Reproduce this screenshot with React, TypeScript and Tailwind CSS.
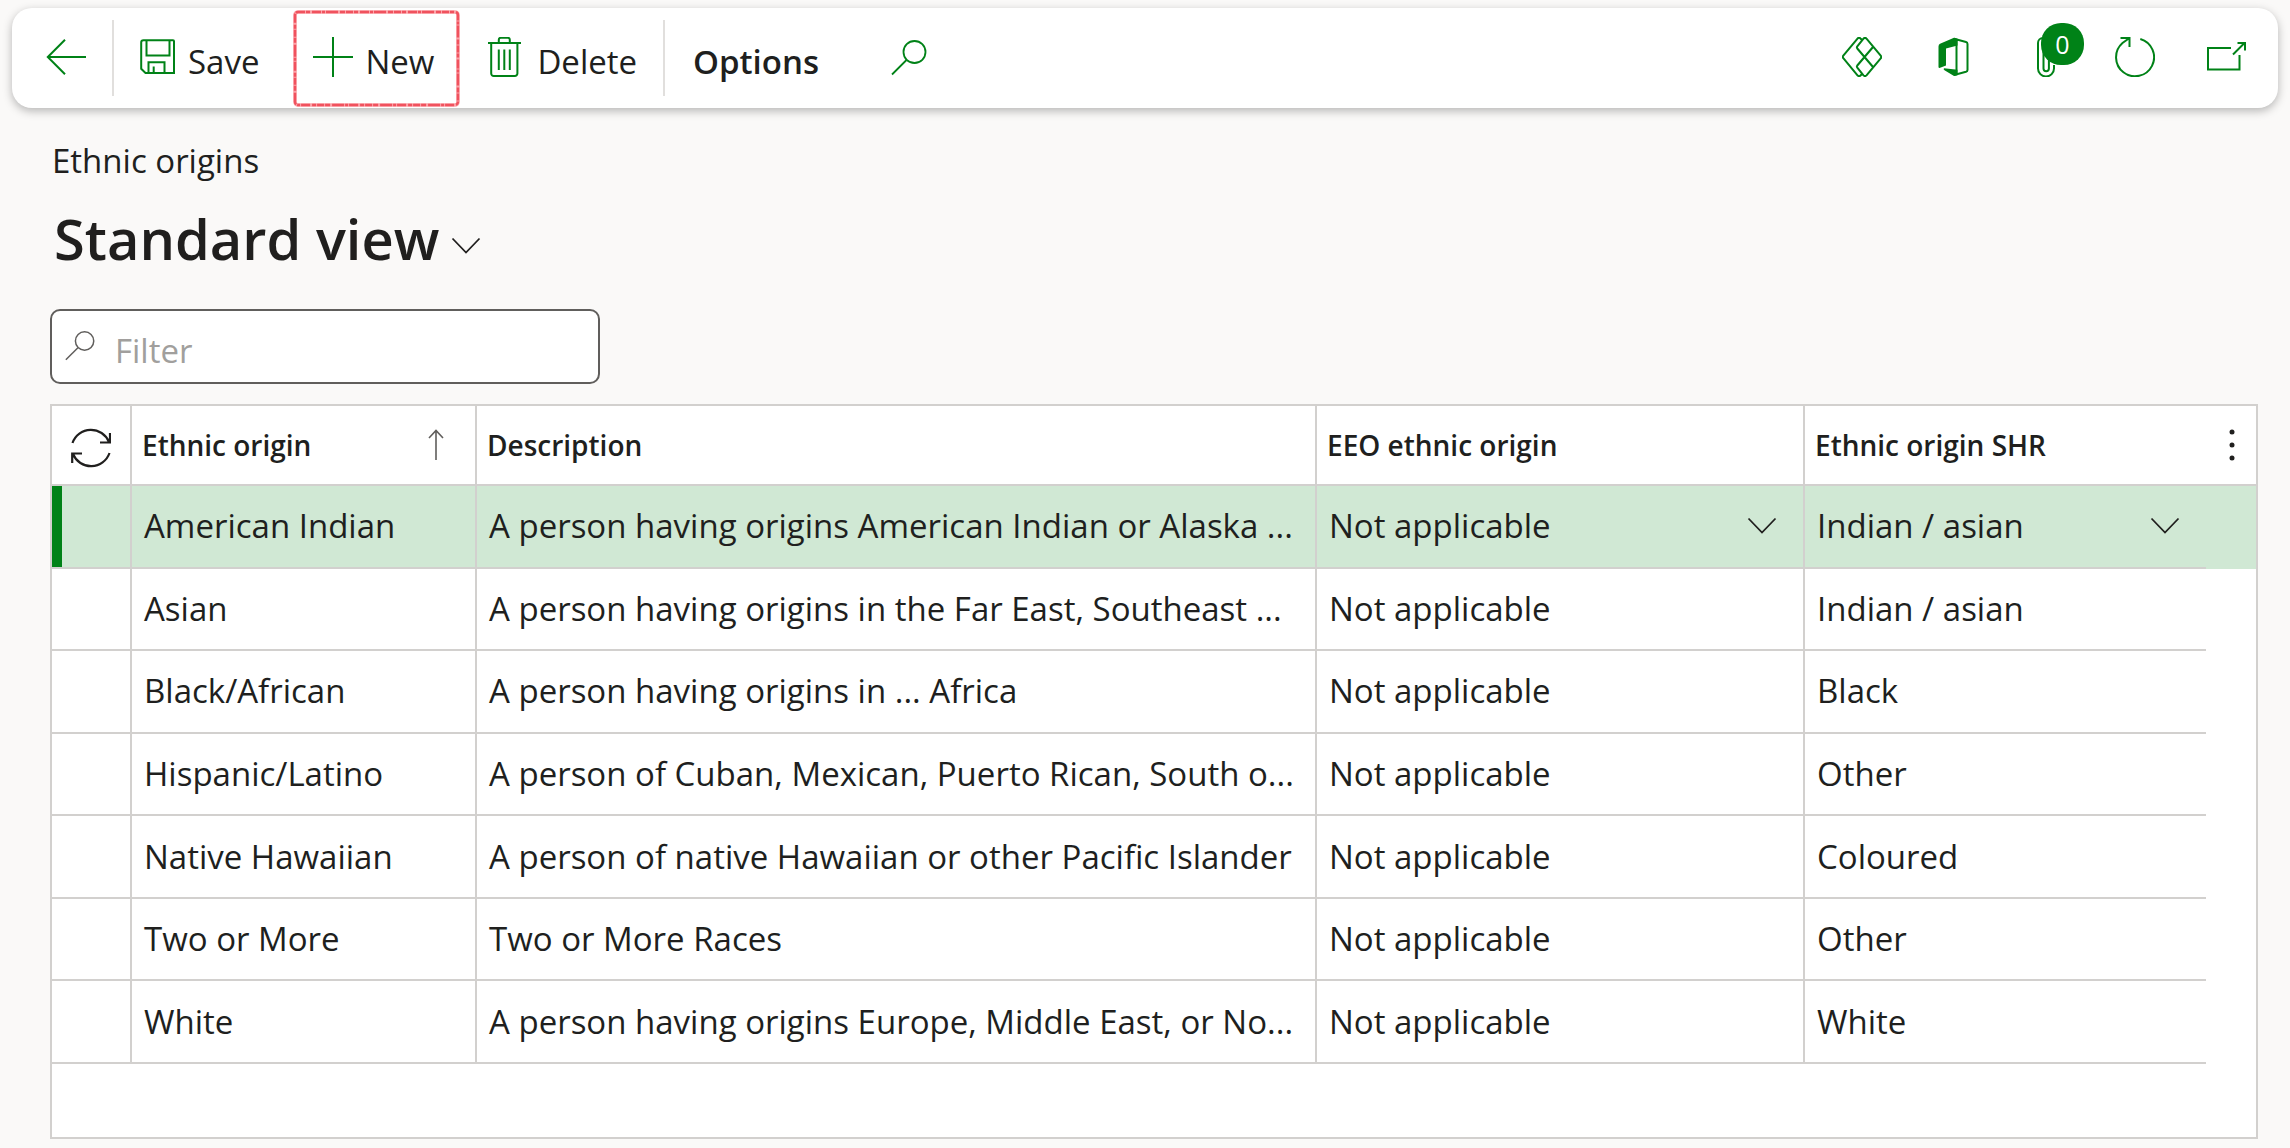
import { ReactNode } from "react";

type Origin = {
  name: string;
  description: string;
  eeo: string;
  shr: string;
};

const origins: Origin[] = [
  {
    name: "American Indian",
    description: "A person having origins American Indian or Alaska ...",
    eeo: "Not applicable",
    shr: "Indian / asian",
  },
  {
    name: "Asian",
    description: "A person having origins in the Far East, Southeast ...",
    eeo: "Not applicable",
    shr: "Indian / asian",
  },
  {
    name: "Black/African",
    description: "A person having origins in ... Africa",
    eeo: "Not applicable",
    shr: "Black",
  },
  {
    name: "Hispanic/Latino",
    description: "A person of Cuban, Mexican, Puerto Rican, South o...",
    eeo: "Not applicable",
    shr: "Other",
  },
  {
    name: "Native Hawaiian",
    description: "A person of native Hawaiian or other Pacific Islander",
    eeo: "Not applicable",
    shr: "Coloured",
  },
  {
    name: "Two or More",
    description: "Two or More Races",
    eeo: "Not applicable",
    shr: "Other",
  },
  {
    name: "White",
    description: "A person having origins Europe, Middle East, or No...",
    eeo: "Not applicable",
    shr: "White",
  },
];

function Icon({
  width,
  height,
  className = "",
  children,
}: {
  width: number;
  height: number;
  className?: string;
  children: ReactNode;
}) {
  return (
    <svg
      width={width}
      height={height}
      viewBox={`0 0 ${width} ${height}`}
      fill="none"
      stroke="currentColor"
      strokeWidth={2}
      className={`shrink-0 ${className}`}
      aria-hidden="true"
    >
      {children}
    </svg>
  );
}

const SearchIcon = ({ className = "" }: { className?: string }) => (
  <Icon width={36} height={36} className={className}>
    <circle cx="23.5" cy="12" r="11" strokeWidth={1.8} />
    <path d="M15.5 20 1 34.5" strokeWidth={1.8} />
  </Icon>
);

const ChevronIcon = ({ className = "" }: { className?: string }) => (
  <Icon width={30} height={18} className={className}>
    <path d="m1.5 1.500 13.500 14 13.500-14" strokeWidth={1.8} />
  </Icon>
);

function Divider() {
  return <div className="h-[76px] w-[2px] shrink-0 bg-[#e1dfdd]" />;
}

function ToolbarLabel({ children }: { children: ReactNode }) {
  return (
    <span className="pt-[6px] text-[33px] leading-none text-[#201f1e]">
      {children}
    </span>
  );
}

function ToolbarIcon({
  label,
  children,
}: {
  label: string;
  children: ReactNode;
}) {
  return (
    <button
      type="button"
      aria-label={label}
      className="relative flex h-10 w-10 items-center justify-center"
    >
      {children}
    </button>
  );
}

function Toolbar() {
  return (
    <header className="mx-3 mt-2 flex h-[100px] items-center justify-between rounded-[20px] bg-white shadow-[0_3px_10px_rgba(0,0,0,0.28)]">
      <div className="flex h-full items-center text-[#008217]">
        <button
          type="button"
          aria-label="Back"
          className="flex h-full items-center pr-[26px] pb-[2px] pl-[34px]"
        >
          <Icon width={40} height={36}>
            <path d="M40 18H2M19 .8 1.800 18 19 35.200" />
          </Icon>
        </button>
        <Divider />
        <button
          type="button"
          className="flex h-full items-center gap-3 px-[26px]"
        >
          <Icon width={36} height={36} className="mb-[2px]">
            <path d="M3.500 1.200H33a1 1 0 0 1 1 1V34H5.500L1.200 29.800V3.500a2.300 2.300 0 0 1 2.300-2.300Z" />
            <path d="M6.500 1.500v15h23v-15M8.500 34V23.200h16V34M13.700 34v-6.500" />
          </Icon>
          <ToolbarLabel>Save</ToolbarLabel>
        </button>
        <button
          type="button"
          className="relative flex h-full items-center gap-3 pr-[26px] pl-7"
        >
          {/* Hand-drawn highlight round the button */}
          <svg
            className="pointer-events-none absolute top-[2px] left-[8px] h-[97px] w-[calc(100%-8px)]"
            fill="none"
            aria-hidden="true"
          >
            <g className="[&>rect]:h-[93px] [&>rect]:w-[calc(100%-4px)]">
              <rect x="2" y="2" rx="3" stroke="#fba3a8" strokeWidth={3.6} />
              <rect
                x="2"
                y="2"
                rx="3"
                stroke="#f0525e"
                strokeWidth={2.4}
                strokeDasharray="7 1 4 2 9 1 3 1 12 2 5 1"
              />
            </g>
          </svg>
          <Icon width={40} height={40} className="mb-[2px]">
            <path d="M0 20h40M20 0v40" />
          </Icon>
          <ToolbarLabel>New</ToolbarLabel>
        </button>
        <button
          type="button"
          className="flex h-full items-center gap-4 pr-[26px] pl-7"
        >
          <Icon width={33} height={40} className="mb-[2px]">
            <path d="M0 6h33M10.800 6V2.800a2 2 0 0 1 2-2h7a2 2 0 0 1 2 2V6M3.200 6v30.500a2.500 2.500 0 0 0 2.500 2.500h21.200a2.500 2.500 0 0 0 2.500-2.500V6" />
            <path d="M10.800 12.500V33M16.300 12.500V33M21.800 12.500V33" />
          </Icon>
          <ToolbarLabel>Delete</ToolbarLabel>
        </button>
        <Divider />
        <button
          type="button"
          className="flex h-full items-center px-7 font-semibold"
        >
          <ToolbarLabel>Options</ToolbarLabel>
        </button>
        <button
          type="button"
          aria-label="Search"
          className="flex h-full items-center px-[44px]"
        >
          <SearchIcon />
        </button>
      </div>

      <div className="flex items-center gap-[51px] pr-8 pb-[2px] text-[#008217]">
        <ToolbarIcon label="Power Apps">
          <Icon width={40} height={40}>
            <path d="M20.500 3.500 18.500 1.500a2 2 0 0 0-3 .1L1.300 18.600a2 2 0 0 0 0 2.600l14.200 17.200a2 2 0 0 0 3 .1l2-2" />
            <path d="M21.500 1.600 15.300 9.300a1.800 1.800 0 0 0 0 2.200L31 30M21.500 38.400l-6.200-7.700a1.800 1.800 0 0 1 0-2.200L31 10M21.500 1.600a2 2 0 0 1 3 0l14.200 17.100a2 2 0 0 1 0 2.600L24.500 38.400a2 2 0 0 1-3 0" />
          </Icon>
        </ToolbarIcon>
        <ToolbarIcon label="Open in Microsoft Office">
          <Icon width={31} height={40}>
            <path
              d="M.5 9.500Q.5 7.500 2 6.800L16 .8l3.500 1v6.700L8 11.500V28.500L1.500 31Q.5 31 .5 30ZM6 31.200l13.500 1.500v5.500L16 39 6.500 33.200Q5 32 6 31.200Z"
              fill="currentColor"
              stroke="none"
            />
            <path d="M16 1.800 28 5q1.500.4 1.500 2v26q0 1.300-1.500 1.800L16 38M18.500 3v34" />
          </Icon>
        </ToolbarIcon>
        <ToolbarIcon label="Attachments">
          <Icon width={40} height={40}>
            <path d="M30 28v3.500a8 8 0 0 1-16 0V6a5 5 0 0 1 10 0M19.500 14v17.500a2.700 2.700 0 0 0 5.400 0V14" />
          </Icon>
          <span className="absolute -top-[14px] left-[17px] flex h-[42px] w-[43px] items-center justify-center rounded-[20px] bg-[#008217] pt-[2px] text-[25px] text-white">
            0
          </span>
        </ToolbarIcon>
        <ToolbarIcon label="Refresh">
          <Icon width={40} height={40}>
            <path d="M25.300 2A19 19 0 1 1 7.500 6L14.500 1M5.500 1H14.500V10" />
          </Icon>
        </ToolbarIcon>
        <ToolbarIcon label="Open in new window">
          <Icon width={40} height={40}>
            <path d="M25 11H2v21.500h31.500V18M27 17.500 38.500 6M31.500 6H39v7.500" />
          </Icon>
        </ToolbarIcon>
      </div>
    </header>
  );
}

const headCell =
  "border-b-2 border-[#d2d0ce] pl-[10px] text-left font-semibold";
const bodyCell = "truncate border-b-2 border-[#d2d0ce] pl-3";

function CellSelect({ label, value }: { label: string; value: string }) {
  return (
    <div className="relative flex items-center">
      <select
        aria-label={label}
        defaultValue={value}
        className="w-full appearance-none bg-transparent"
      >
        <option>{value}</option>
      </select>
      <ChevronIcon className="pointer-events-none absolute right-[26px]" />
    </div>
  );
}

function OriginsTable() {
  return (
    <div className="h-[735px] overflow-hidden border-2 border-[#d2d0ce] bg-white">
      <table className="h-[658px] w-full table-fixed border-separate border-spacing-0 text-[33px] leading-[46px] text-[#201f1e]">
        <colgroup>
          <col className="w-[80px]" />
          <col className="w-[345px]" />
          <col />
          <col className="w-[488px]" />
          <col className="w-[401px]" />
          <col className="w-[50px]" />
        </colgroup>
        <thead className="text-[28px]">
          <tr className="h-20">
            <th className="border-r-2 border-b-2 border-[#d2d0ce]">
              <button
                type="button"
                aria-label="Refresh rows"
                className="block px-[19px] pt-[6px]"
              >
                <Icon width={40} height={40}>
                  <path
                    d="M1.500 15A19.500 19.500 0 0 1 38 14M39 5v9.500H29M38.500 25A19.500 19.500 0 0 1 2 26M1.200 35v-9.500H11"
                    strokeWidth={2.2}
                  />
                </Icon>
              </button>
            </th>
            <th className={`${headCell} border-r-2`}>
              <div className="flex items-center justify-between pr-[31px]">
                Ethnic origin
                <Icon width={16} height={32} className="text-[#605e5c]">
                  <path d="M8 31V1.500M1 9 8 1.500 15 9" strokeWidth={1.6} />
                </Icon>
              </div>
            </th>
            <th className={`${headCell} border-r-2`}>Description</th>
            <th className={`${headCell} border-r-2`}>EEO ethnic origin</th>
            <th className={headCell}>Ethnic origin SHR</th>
            <th className="border-b-2 border-[#d2d0ce]">
              <button
                type="button"
                aria-label="Grid options"
                className="block pl-[21px]"
              >
                <Icon width={10} height={32}>
                  <g fill="currentColor" stroke="none">
                    <circle cx="5" cy="3" r="2.5" />
                    <circle cx="5" cy="16" r="2.5" />
                    <circle cx="5" cy="29" r="2.5" />
                  </g>
                </Icon>
              </button>
            </th>
          </tr>
        </thead>
        <tbody>
          {origins.map((origin, i) => {
            const selected = i === 0;
            return (
              <tr key={origin.name} className={selected ? "bg-[#d0e8d4]" : ""}>
                <td
                  className={`border-r-2 border-b-2 border-[#d2d0ce] ${selected ? "shadow-[inset_10px_0_0_#008217]" : ""}`}
                />
                <td className={`${bodyCell} border-r-2`}>{origin.name}</td>
                <td className={`${bodyCell} border-r-2`}>
                  {origin.description}
                </td>
                <td className={`${bodyCell} border-r-2`}>
                  {selected ? (
                    <CellSelect label="EEO ethnic origin" value={origin.eeo} />
                  ) : (
                    origin.eeo
                  )}
                </td>
                <td className={bodyCell}>
                  {selected ? (
                    <CellSelect label="Ethnic origin SHR" value={origin.shr} />
                  ) : (
                    origin.shr
                  )}
                </td>
                <td />
              </tr>
            );
          })}
        </tbody>
      </table>
    </div>
  );
}

export default function App() {
  return (
    <div className="flow-root min-h-screen bg-[#faf9f8] font-['Segoe_UI','Open_Sans',sans-serif] text-[#201f1e]">
      <Toolbar />
      <main className="pr-8 pl-[50px]">
        <p className="mt-[30px] pl-[2px] text-[33px] leading-[46px]">
          Ethnic origins
        </p>
        <h1 className="mt-[14px] pl-1 text-[56px] leading-[80px] font-semibold">
          <button type="button" className="flex items-center gap-3">
            Standard view
            <ChevronIcon className="mt-4" />
          </button>
        </h1>
        <label className="mt-[31px] flex h-[75px] w-[550px] items-center gap-5 rounded-[10px] border-2 border-[#605e5c] bg-white pl-[13px]">
          <SearchIcon className="mb-[2px] h-[30px] w-[30px] text-[#605e5c]" />
          <input
            type="text"
            aria-label="Filter"
            placeholder="Filter"
            className="min-w-0 flex-1 pt-2 text-[33px] leading-[46px] outline-none placeholder:text-[#a19f9d]"
          />
        </label>
        <div className="mt-5">
          <OriginsTable />
        </div>
      </main>
    </div>
  );
}
